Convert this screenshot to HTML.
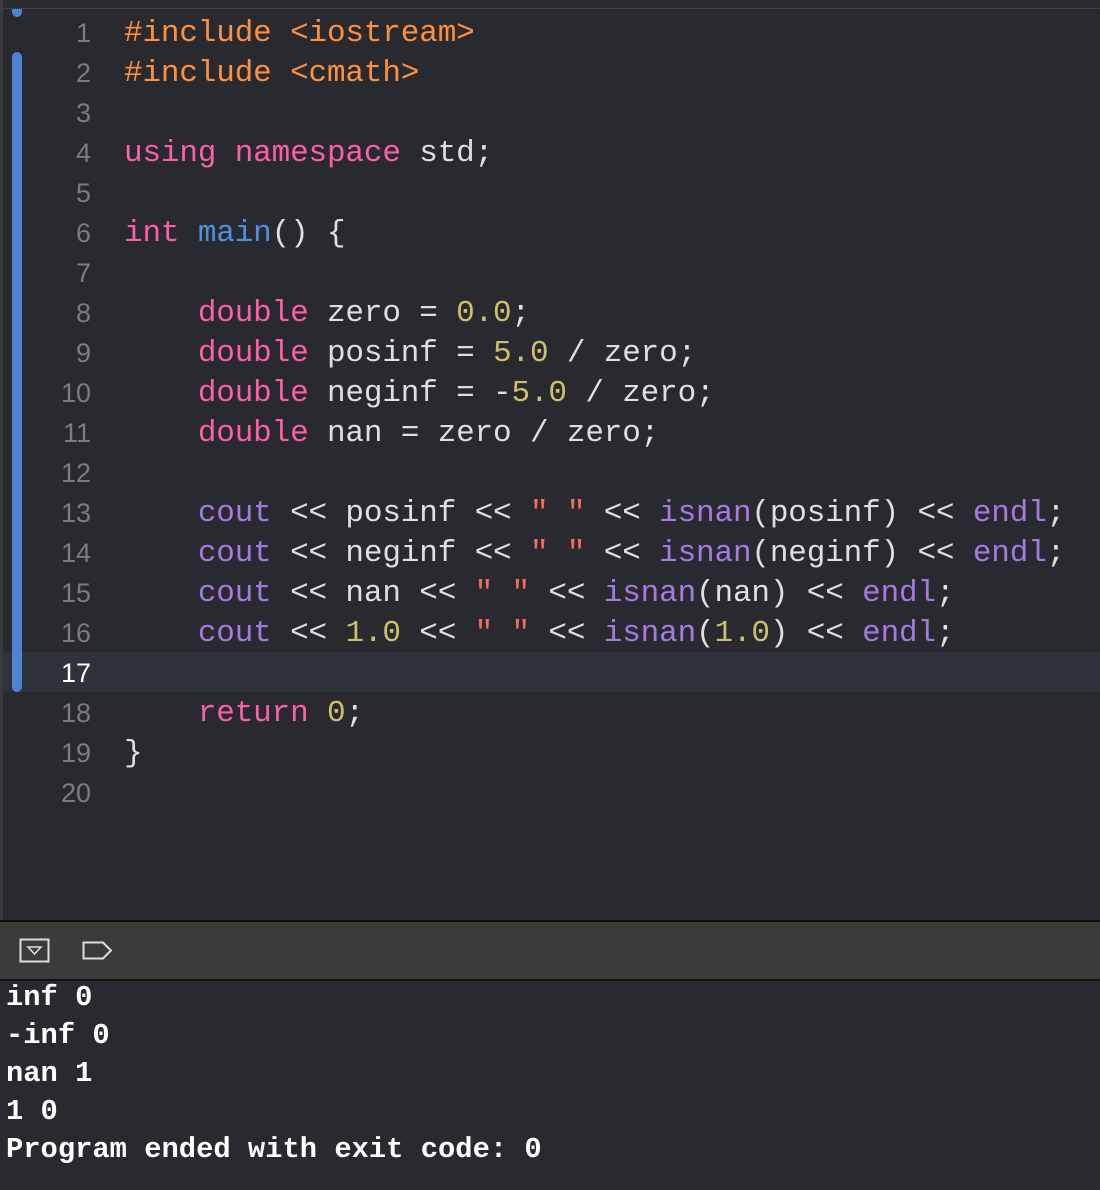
<!DOCTYPE html>
<html><head><meta charset="utf-8"><style>
html,body{margin:0;padding:0}
body{width:1100px;height:1190px;background:#292a30;position:relative;overflow:hidden;font-family:"Liberation Mono",monospace}
.top{position:absolute;left:0;top:0;width:1100px;height:8px;background:#2a2b2f;border-bottom:1px dotted #555}
.lstrip{position:absolute;left:0;top:0;width:3px;height:920px;background:#3b3b3e}
.cur{position:absolute;left:3px;top:652px;width:1097px;height:40px;background:#2f323a}
.bar{position:absolute;left:12px;top:52px;width:10px;height:640px;background:#4d84d0;border-radius:5px}
.dot{position:absolute;left:12px;top:9px;width:10px;height:8px;background:#4d84d0;border-radius:0 0 5px 5px}
.ln{position:absolute;left:30px;top:13px;width:61px;text-align:right;font-size:27px;color:#7c7c80;line-height:40px;font-family:"Liberation Sans",sans-serif}
.code{position:absolute;left:124px;top:14px;font-size:31px;line-height:40px;color:#dfdfe0;white-space:pre;letter-spacing:-0.15px}
.k{color:#fc5fa3}.p{color:#fd8f3f}.s{color:#fc6a5d}.n{color:#d0bf69}.c{color:#a47ae0}.f{color:#4f8fe0}
.tb{position:absolute;left:0;top:920px;width:1100px;height:57px;background:#3a3c3a;border-top:2px solid #111;border-bottom:2px solid #111}
.con{position:absolute;left:6px;top:979px;font-size:28.8px;line-height:38px;font-weight:bold;color:#fff;white-space:pre}
</style></head><body>
<div class="top"></div>
<div class="lstrip"></div>
<div class="cur"></div>
<div class="dot"></div><div class="bar"></div>
<div class="ln">1<br>2<br>3<br>4<br>5<br>6<br>7<br>8<br>9<br>10<br>11<br>12<br>13<br>14<br>15<br>16<br><span style="color:#fff">17</span><br>18<br>19<br>20</div>
<div class="code"><span class="p">#include &lt;iostream&gt;</span>
<span class="p">#include &lt;cmath&gt;</span>

<span class="k">using namespace</span> std;

<span class="k">int</span> <span class="f">main</span>() {

    <span class="k">double</span> zero = <span class="n">0.0</span>;
    <span class="k">double</span> posinf = <span class="n">5.0</span> / zero;
    <span class="k">double</span> neginf = -<span class="n">5.0</span> / zero;
    <span class="k">double</span> nan = zero / zero;

    <span class="c">cout</span> &lt;&lt; posinf &lt;&lt; <span class="s">" "</span> &lt;&lt; <span class="c">isnan</span>(posinf) &lt;&lt; <span class="c">endl</span>;
    <span class="c">cout</span> &lt;&lt; neginf &lt;&lt; <span class="s">" "</span> &lt;&lt; <span class="c">isnan</span>(neginf) &lt;&lt; <span class="c">endl</span>;
    <span class="c">cout</span> &lt;&lt; nan &lt;&lt; <span class="s">" "</span> &lt;&lt; <span class="c">isnan</span>(nan) &lt;&lt; <span class="c">endl</span>;
    <span class="c">cout</span> &lt;&lt; <span class="n">1.0</span> &lt;&lt; <span class="s">" "</span> &lt;&lt; <span class="c">isnan</span>(<span class="n">1.0</span>) &lt;&lt; <span class="c">endl</span>;

    <span class="k">return</span> <span class="n">0</span>;
}
</div>
<div class="tb">
<svg width="140" height="57" style="position:absolute;left:0;top:0">
<rect x="20.5" y="17.5" width="28" height="22" fill="none" stroke="#ddd" stroke-width="2"/>
<path d="M28 25 L41 25 L34.5 32 Z" fill="none" stroke="#ddd" stroke-width="1.5"/>
<path d="M83.5 20.5 L103 20.5 L111 28.5 L103 36.5 L83.5 36.5 Z" fill="none" stroke="#ddd" stroke-width="2"/>
</svg>
</div>
<div class="con">inf 0
-inf 0
nan 1
1 0
Program ended with exit code: 0</div>
</body></html>
